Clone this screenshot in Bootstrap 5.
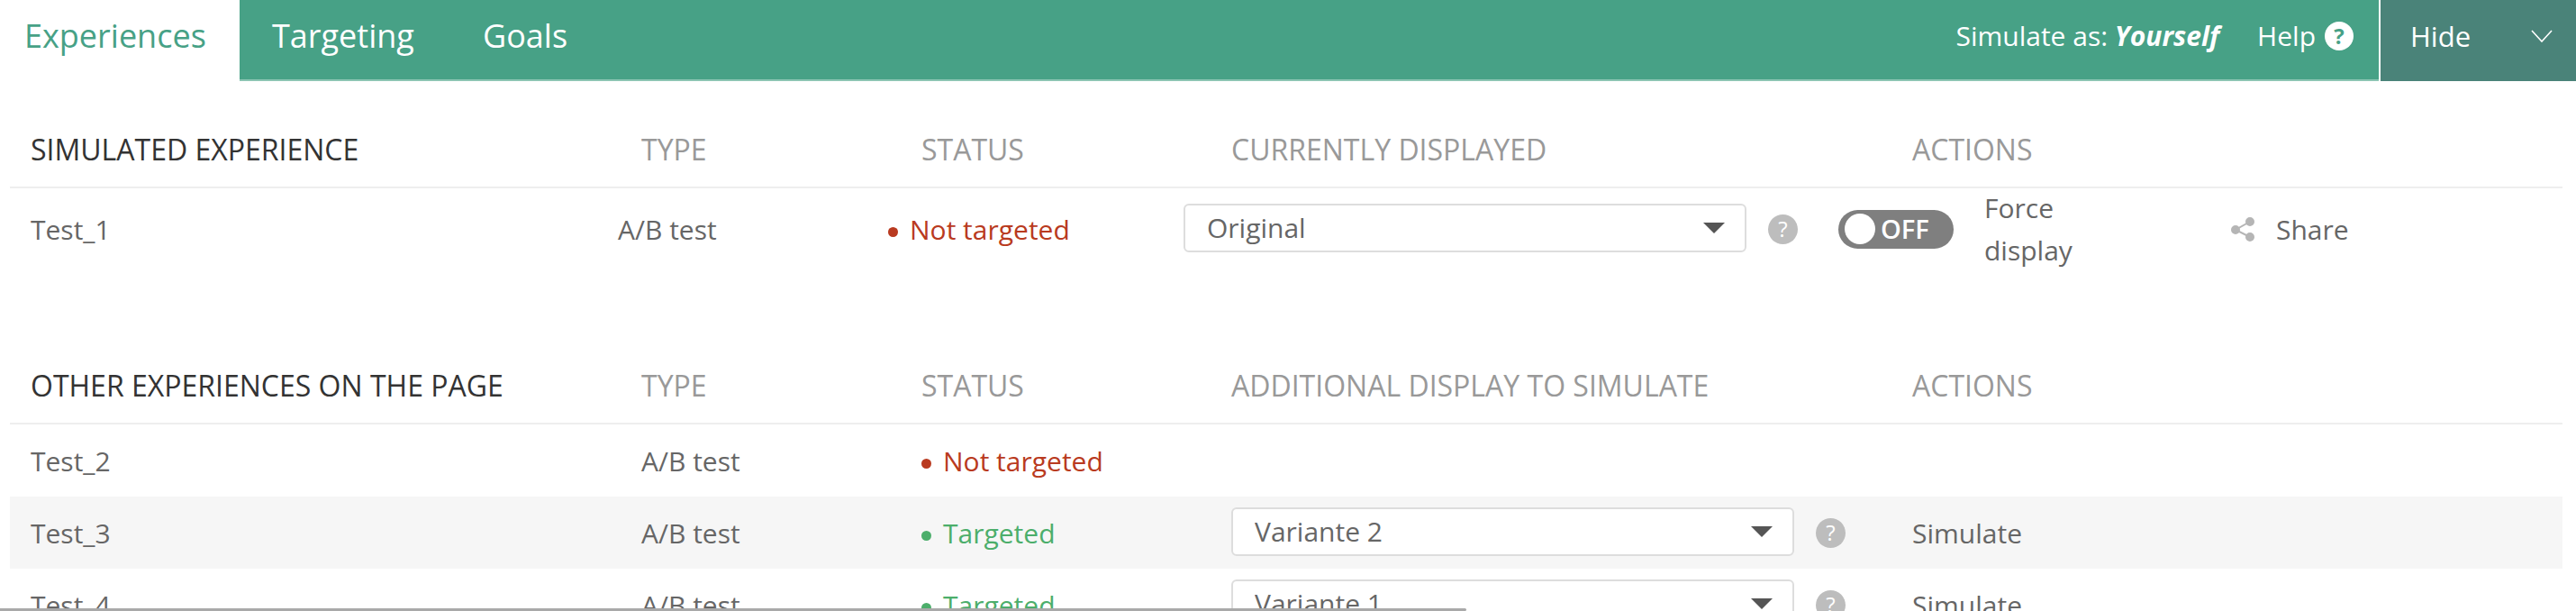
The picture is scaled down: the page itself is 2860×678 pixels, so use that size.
<!DOCTYPE html>
<html lang="en">
<head>
<meta charset="utf-8">
<title>Simulation</title>
<link rel="stylesheet" href="https://cdn.jsdelivr.net/npm/bootstrap@5.3.0/dist/css/bootstrap.min.css">
<style>
html,body{height:678px;overflow:hidden;background:#fff}
body{font-family:"Open Sans",sans-serif;font-size:30px;color:#666;position:relative}
.topbar{height:90px;background:#47a186;border-bottom:2px solid #8cc5b3;color:#fff}
.topbar .nav-link{font-size:36px;color:#fff;padding:0 36px;height:88px;line-height:80px}
.topbar .nav-link.active{background:#fff;color:#47a186;padding:0 38px 0 27px;height:90px;width:266px}
.topbar .tab2{width:270px;padding-left:36px}
.simas{font-size:30px;line-height:80px;margin-right:42px}
.simas em{font-weight:700}
.helplink{font-size:30px;line-height:80px;margin-right:28px}
.helpdot{width:32px;height:32px;background:#fff;color:#47a186;font-size:24px;font-weight:700;margin-left:10px}
.hidebar{width:219px;height:90px;background:#4a8379;border-left:2px solid #fff;padding:0 26px 10px 33px;font-size:31px}
.tbl{margin-left:11px;width:2834px}
.headrow{border-bottom:2px solid #eee;text-transform:uppercase;color:#999;font-size:32px}
.headrow.first{height:119px;padding-top:52px}
.headrow.second{height:120px;padding-top:53px}
.headrow>div,.datarow>div{padding-left:23px}
.c1{width:678px}.c2{width:311px}.c3{width:344px}.c4{width:756px}.c5{flex:1}
.headrow .c1{color:#333}
.datarow{height:80px}
.datarow.striped{background:#f6f6f6}
.row1{height:142px;align-items:flex-start}
.row1 .cell{height:90px}
.r1a{width:652px;padding-left:23px}
.r1b{width:323px;padding-left:23px}
.r1c{width:328px}
.status-off{color:#b93a20}
.status-on{color:#4cae6b}
.pip{display:inline-block;width:11px;height:11px;border-radius:50%;background:currentColor;margin-right:13px;vertical-align:3px}
.form-select.pick{width:625px;height:54px;margin-bottom:2px;border:2px solid #ddd;border-radius:6px;font-size:30px;color:#666;padding:0 40px 0 24px;line-height:50px;font-family:inherit;background-size:24px 12px;background-position:right 22px center;background-image:url("data:image/svg+xml,%3Csvg xmlns='http://www.w3.org/2000/svg' viewBox='0 0 24 12'%3E%3Cpath fill='%23555' d='M0 0h24L12 12z'/%3E%3C/svg%3E")}
.hint{width:33px;height:33px;background:#bdbdbd;color:#fff;font-size:24px;margin-left:24px;flex:none}
.toggle{width:128px;height:43px;background:#7f7f7f;color:#fff;font-size:29px;font-weight:600;padding-left:7px;margin-left:45px;margin-right:34px;flex:none}
.knob{width:34px;height:34px;background:#fff;margin-right:6px;flex:none}
.force{width:110px;margin-right:164px;line-height:47px}
.shareicon{margin-right:24px;flex:none}
.scrollthumb{position:absolute;left:0;bottom:0;width:1628px;height:3px;background:#a9a9a9;border-radius:0 3px 3px 0}
</style>
</head>
<body>
<nav class="topbar d-flex align-items-start">
  <ul class="nav flex-grow-1">
    <li class="nav-item"><a class="nav-link active" href="#">Experiences</a></li>
    <li class="nav-item"><a class="nav-link tab2" href="#">Targeting</a></li>
    <li class="nav-item"><a class="nav-link px-0" href="#">Goals</a></li>
  </ul>
  <div class="simas">Simulate as: <em>Yourself</em></div>
  <div class="helplink d-flex align-items-center">Help <span class="helpdot rounded-circle d-inline-flex align-items-center justify-content-center">?</span></div>
  <div class="hidebar d-flex align-items-center justify-content-between">
    <span>Hide</span>
    <svg width="24" height="14" viewBox="0 0 24 14" fill="none" stroke="#fff" stroke-width="1.6"><path d="M1 1l11 12L23 1"/></svg>
  </div>
</nav>

<div class="tbl">
  <div class="headrow first d-flex">
    <div class="c1">Simulated experience</div><div class="c2">Type</div><div class="c3">Status</div><div class="c4">Currently displayed</div><div class="c5">Actions</div>
  </div>
  <div class="row1 d-flex">
    <div class="cell d-flex align-items-center r1a">Test_1</div>
    <div class="cell d-flex align-items-center r1b">A/B test</div>
    <div class="cell d-flex align-items-center r1c status-off"><span><span class="pip"></span>Not targeted</span></div>
    <div class="cell d-flex align-items-center">
      <select class="form-select pick"><option>Original</option></select>
      <span class="hint rounded-circle d-inline-flex align-items-center justify-content-center">?</span>
      <span class="toggle rounded-pill d-inline-flex align-items-center"><span class="knob rounded-circle"></span>OFF</span>
      <span class="force">Force display</span>
      <svg class="shareicon" width="26" height="27" viewBox="0 0 26 27" fill="#b5b5b5" stroke="#b5b5b5" stroke-width="2"><circle cx="21" cy="5" r="4"/><circle cx="5" cy="14" r="4"/><circle cx="21" cy="22" r="4"/><path fill="none" d="M21 5L5 14l16 8"/></svg>
      <span>Share</span>
    </div>
  </div>

  <div class="headrow second d-flex">
    <div class="c1">Other experiences on the page</div><div class="c2">Type</div><div class="c3">Status</div><div class="c4">Additional display to simulate</div><div class="c5">Actions</div>
  </div>
  <div class="datarow d-flex align-items-center">
    <div class="c1">Test_2</div><div class="c2">A/B test</div><div class="c3 status-off"><span class="pip"></span>Not targeted</div>
  </div>
  <div class="datarow striped d-flex align-items-center">
    <div class="c1">Test_3</div><div class="c2">A/B test</div><div class="c3 status-on"><span class="pip"></span>Targeted</div>
    <div class="c4 d-flex align-items-center"><select class="form-select pick"><option>Variante 2</option></select><span class="hint rounded-circle d-inline-flex align-items-center justify-content-center">?</span></div>
    <div class="c5">Simulate</div>
  </div>
  <div class="datarow d-flex align-items-center">
    <div class="c1">Test_4</div><div class="c2">A/B test</div><div class="c3 status-on"><span class="pip"></span>Targeted</div>
    <div class="c4 d-flex align-items-center"><select class="form-select pick"><option>Variante 1</option></select><span class="hint rounded-circle d-inline-flex align-items-center justify-content-center">?</span></div>
    <div class="c5">Simulate</div>
  </div>
</div>
<div class="scrollthumb"></div>
<script src="https://cdn.jsdelivr.net/npm/bootstrap@5.3.0/dist/js/bootstrap.bundle.min.js"></script>
</body>
</html>
